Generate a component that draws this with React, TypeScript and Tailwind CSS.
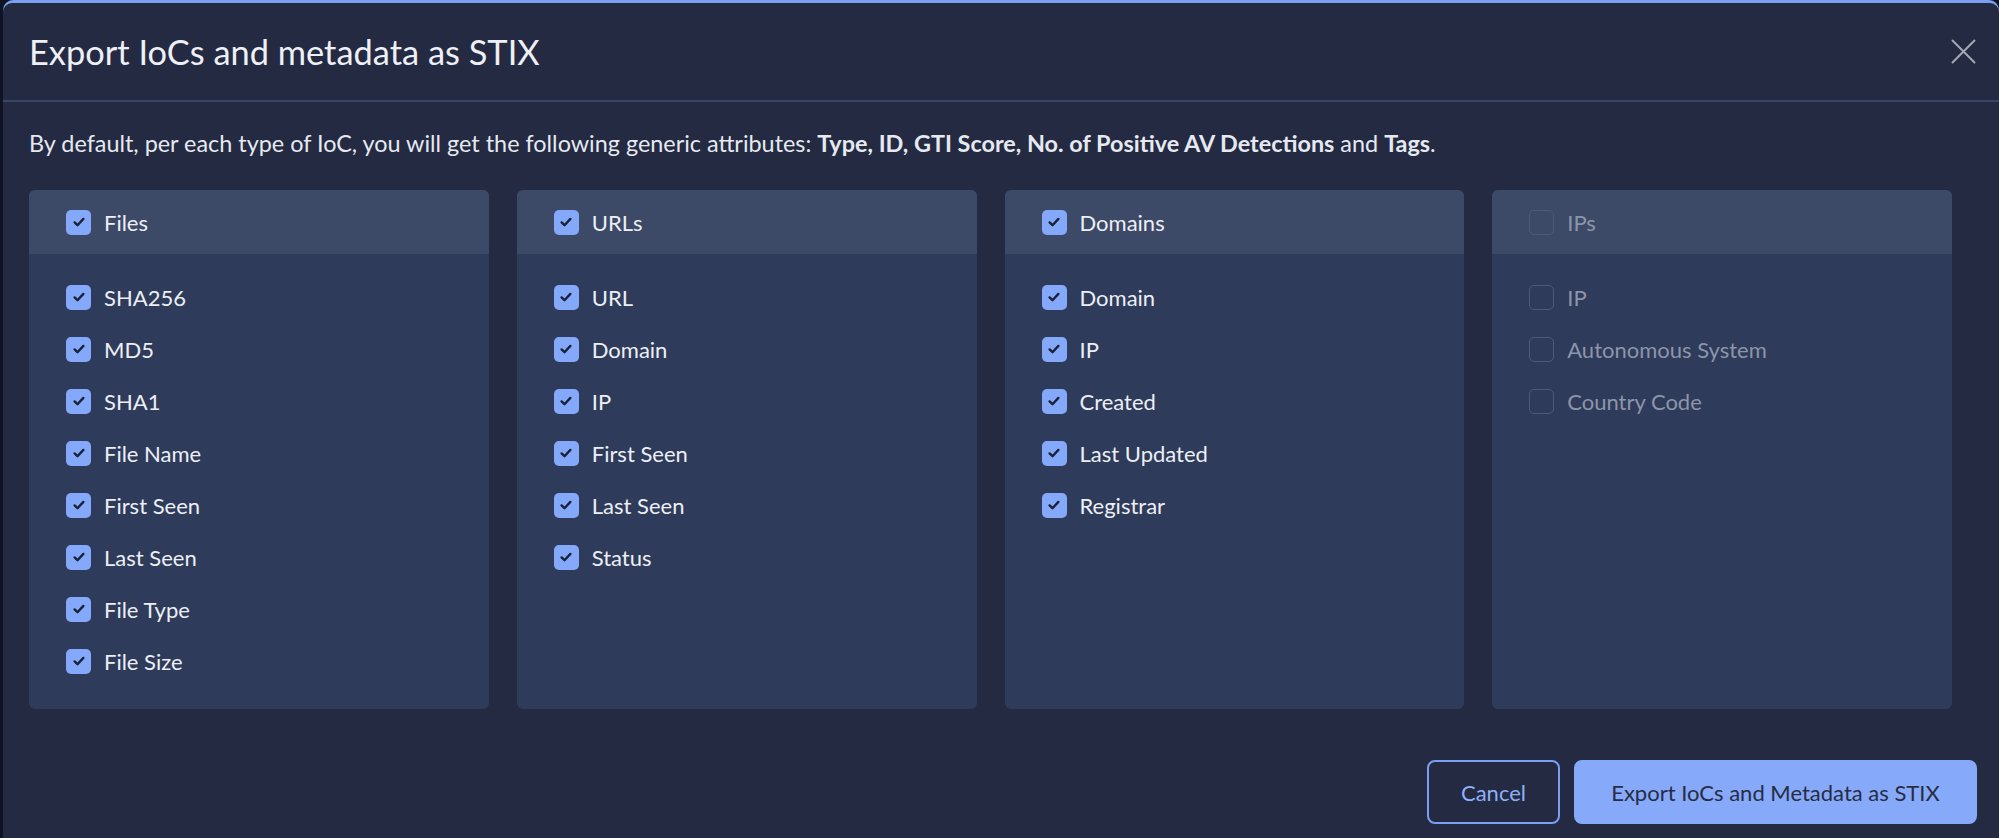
import { useState } from "react";

type Group = {
  title: string;
  items: string[];
  enabled: boolean;
};

const groups: Group[] = [
  {
    title: "Files",
    items: ["SHA256", "MD5", "SHA1", "File Name", "First Seen", "Last Seen", "File Type", "File Size"],
    enabled: true,
  },
  {
    title: "URLs",
    items: ["URL", "Domain", "IP", "First Seen", "Last Seen", "Status"],
    enabled: true,
  },
  {
    title: "Domains",
    items: ["Domain", "IP", "Created", "Last Updated", "Registrar"],
    enabled: true,
  },
  {
    title: "IPs",
    items: ["IP", "Autonomous System", "Country Code"],
    enabled: false,
  },
];

const CheckBox = ({ checked }: { checked: boolean }) =>
  checked ? (
    <span className="flex h-[25px] w-[25px] shrink-0 items-center justify-center rounded-[5px] bg-[#85a9fa]">
      <svg width="14" height="14" viewBox="0 0 14 14" fill="none">
        <path
          d="M2.6 7.4l2.9 2.8 5.9-6.3"
          stroke="#1b2136"
          strokeWidth="2.4"
          strokeLinecap="round"
          strokeLinejoin="round"
        />
      </svg>
    </span>
  ) : (
    <span className="h-[25px] w-[25px] shrink-0 rounded-[5px] border-[1.5px] border-[#4c5a7c]" />
  );

const GroupCard = ({ group }: { group: Group }) => {
  const [checked] = useState(group.enabled);
  const textColor = checked ? "text-[#eceff5]" : "text-[#8c95a9]";
  return (
    <div className="flex flex-col overflow-hidden rounded-[6px] bg-[#2f3b5a]">
      <div className="flex h-[64px] items-center gap-[13px] bg-[#3c4967] pl-[37px]">
        <CheckBox checked={checked} />
        <span className={`text-[22px] ${textColor}`}>{group.title}</span>
      </div>
      <div className="flex flex-col gap-[28px] pb-[36px] pl-[37px] pt-[31px]">
        {group.items.map((item, index) => (
          <label key={`${item}_${index}`} className="flex h-[24px] items-center gap-[13px]">
            <CheckBox checked={checked} />
            <span className={`text-[22px] ${textColor}`}>{item}</span>
          </label>
        ))}
      </div>
    </div>
  );
};

export default function App() {
  return (
    <div
      className="flex h-[838px] w-full overflow-hidden bg-[#0e1423]"
      style={{ fontFamily: "Lato, 'Open Sans', sans-serif" }}>
      <div className="ml-[3px] flex flex-1 flex-col rounded-t-[10px] bg-[#7ba0f2] pt-[3px]">
        <div className="flex flex-1 flex-col rounded-t-[9px] bg-[#232a42]">
          {/* header */}
          <div className="flex h-[99px] items-center justify-between border-b-2 border-[#384563] pl-[26px] pr-[16px]">
            <h2 className="text-[34.4px] text-[#eef0f5]">Export IoCs and metadata as STIX</h2>
            <button className="flex h-[40px] w-[40px] items-center justify-center">
              <svg width="25" height="25" viewBox="0 0 25 25" fill="none">
                <path d="M1.5 1.5l22 22M23.5 1.5l-22 22" stroke="#a3a8b3" strokeWidth="2" strokeLinecap="round" />
              </svg>
            </button>
          </div>

          <div className="flex flex-col pl-[26px] pr-[47px]">
            <p className="mt-[24px] text-[23.4px] text-[#e6e9f0]">
              By default, per each type of IoC, you will get the following generic attributes:{" "}
              <b>Type, ID, GTI Score, No. of Positive AV Detections</b> and <b>Tags</b>.
            </p>

            <div className="mt-[29px] grid grid-cols-4 gap-[28px]">
              {groups.map((group) => (
                <GroupCard key={group.title} group={group} />
              ))}
            </div>
          </div>

          {/* footer */}
          <div className="mt-auto flex justify-end gap-[14px] pb-[14px] pr-[22px]">
            <button className="h-[64px] w-[133px] rounded-[8px] border-2 border-[#7b9ff0] text-[22px] text-[#8fb0f7]">
              Cancel
            </button>
            <button className="h-[64px] w-[403px] rounded-[8px] bg-[#86a9fa] text-[22px] text-[#262d45]">
              Export IoCs and Metadata as STIX
            </button>
          </div>
        </div>
      </div>
    </div>
  );
}
